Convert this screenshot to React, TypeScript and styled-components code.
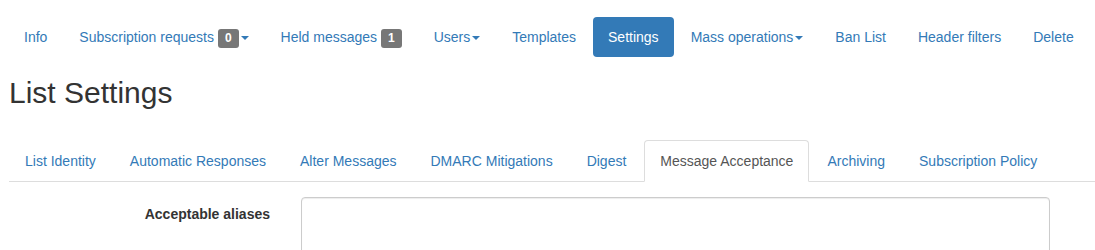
import { FC } from "react";
import styled, { createGlobalStyle } from "styled-components";

const LINK = "#337ab7";

const GlobalStyle = createGlobalStyle`
	html, body {
		margin:0;
		padding:0;
		background:#fff;
	}
	body {
		font-family:"Liberation Sans", Arial, Helvetica, sans-serif;
		font-size:14px;
		line-height:20px;
		color:#333;
	}
	* {
		box-sizing:border-box;
	}
`;

interface INavItem {
	label:string;
	badge?:string;
	caret?:boolean;
	active?:boolean;
}

const NAV:INavItem[] = [
	{ label:"Info" },
	{ label:"Subscription requests", badge:"0", caret:true },
	{ label:"Held messages", badge:"1" },
	{ label:"Users", caret:true },
	{ label:"Templates" },
	{ label:"Settings", active:true },
	{ label:"Mass operations", caret:true },
	{ label:"Ban List" },
	{ label:"Header filters" },
	{ label:"Delete" },
];

const TABS = [
	"List Identity",
	"Automatic Responses",
	"Alter Messages",
	"DMARC Mitigations",
	"Digest",
	"Message Acceptance",
	"Archiving",
	"Subscription Policy",
];

const ACTIVE_TAB = 5;

export default function App() {

	const dnav = NAV.map((item, i) => {
		return (
			<Pill key={ "n" + i }>
				<PillLink href="#" $active={ item.active }>
					{ item.label }
					{ item.badge ? <>{ " " }<Badge>{ item.badge }</Badge></> : null }
					{ item.caret ? <Caret /> : null }
				</PillLink>
			</Pill>
		);
	});

	const dtabs = TABS.map((label, i) => {
		return (
			<Tab key={ "t" + i }>
				<TabLink href="#" $active={ i === ACTIVE_TAB }>
					{ label }
				</TabLink>
			</Tab>
		);
	});

	return (
		<>
			<GlobalStyle />
			<Page>
				<Pills>
					{ dnav }
				</Pills>

				<Title>List Settings</Title>

				<Tabs>
					{ dtabs }
				</Tabs>

				<FormRow label="Acceptable aliases" />
			</Page>
		</>
	);
}

const FormRow:FC<{ label:string }> = props => {
	return (
		<Row>
			<Label htmlFor="acceptable_aliases">{ props.label }</Label>
			<TextArea id="acceptable_aliases" />
		</Row>
	);
};

const Page = styled.div`
	padding:17px 0 0 9px;
	overflow:hidden;
	height:250px;
`;

const Pills = styled.ul`
	display:flex;
	list-style:none;
	margin:0;
	padding:0;
`;

const Pill = styled.li`
	& + & {
		margin-left:2px;
	}
`;

const PillLink = styled.a<{ $active?:boolean }>`
	display:block;
	padding:10px 15px;
	border-radius:4px;
	text-decoration:none;
	white-space:nowrap;
	color:${ p => p.$active ? "#fff" : LINK };
	background:${ p => p.$active ? LINK : "transparent" };
`;

const Badge = styled.span`
	display:inline;
	padding:2px 7px 3px;
	font-size:12px;
	font-weight:bold;
	line-height:12px;
	color:#fff;
	background:#777;
	border-radius:3px;
	vertical-align:baseline;
`;

const Caret = styled.span`
	display:inline-block;
	width:0;
	height:0;
	margin-left:2px;
	vertical-align:middle;
	border-top:4px solid;
	border-left:4px solid transparent;
	border-right:4px solid transparent;
`;

const Title = styled.h2`
	margin:19px 0 31px;
	font-size:30px;
	font-weight:500;
	line-height:1.1;
	color:#333;
`;

const Tabs = styled.ul`
	display:flex;
	list-style:none;
	margin:0;
	padding:0;
	border-bottom:1px solid #ddd;
`;

const Tab = styled.li`
	margin-bottom:-1px;
`;

const TabLink = styled.a<{ $active?:boolean }>`
	display:block;
	margin-right:2px;
	padding:10px 15px;
	border:1px solid ${ p => p.$active ? "#ddd" : "transparent" };
	border-bottom-color:${ p => p.$active ? "#fff" : "transparent" };
	border-radius:4px 4px 0 0;
	text-decoration:none;
	white-space:nowrap;
	color:${ p => p.$active ? "#555" : LINK };
	background:${ p => p.$active ? "#fff" : "transparent" };
`;

const Row = styled.div`
	display:flex;
	gap:31px;
	margin-top:15px;
`;

const Label = styled.label`
	width:261px;
	padding-top:7px;
	text-align:right;
	font-weight:bold;
`;

const TextArea = styled.textarea`
	width:749px;
	height:120px;
	padding:6px 12px;
	border:1px solid #ccc;
	border-radius:4px;
	box-shadow:inset 0 1px 1px rgba(0,0,0,0.075);
	font-family:inherit;
	font-size:14px;
	color:#555;
	resize:vertical;
`;
